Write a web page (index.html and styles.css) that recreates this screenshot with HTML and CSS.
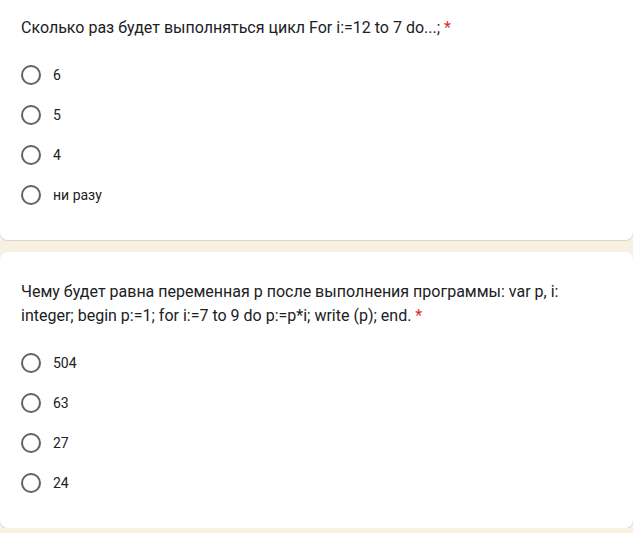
FILE: index.html
```html
<!DOCTYPE html>
<html lang="ru">
<head>
<meta charset="utf-8">
<title>Форма</title>
<link rel="stylesheet" href="styles.css">
</head>
<body>
<div class="page">
  <section class="card">
    <div class="question">Сколько раз будет выполняться цикл For i:=12 to 7 do...; <span class="req">*</span></div>
    <div class="options">
      <label class="option"><span class="radio"></span><span class="label">6</span></label>
      <label class="option"><span class="radio"></span><span class="label">5</span></label>
      <label class="option"><span class="radio"></span><span class="label">4</span></label>
      <label class="option"><span class="radio"></span><span class="label">ни разу</span></label>
    </div>
  </section>
  <section class="card">
    <div class="question">Чему будет равна переменная p после выполнения программы: var p, i: integer; begin p:=1; for i:=7 to 9 do p:=p*i; write (p); end. <span class="req">*</span></div>
    <div class="options">
      <label class="option"><span class="radio"></span><span class="label">504</span></label>
      <label class="option"><span class="radio"></span><span class="label">63</span></label>
      <label class="option"><span class="radio"></span><span class="label">27</span></label>
      <label class="option"><span class="radio"></span><span class="label">24</span></label>
    </div>
  </section>
</div>
</body>
</html>
```
FILE: styles.css
```css
html, body {
  margin: 0;
  padding: 0;
  background: #f7f0e3;
  overflow: hidden;
}
.page {
  margin-top: -12px;
  display: flex;
  flex-direction: column;
  gap: 12px;
}
.card {
  background: #fff;
  border-radius: 8px;
  box-shadow: 0 1px 1px rgba(0,0,0,0.12);
  padding: 28px 24px 25px 21px;
}
.question {
  font-family: Roboto, "Noto Sans", sans-serif;
  font-size: 16px;
  line-height: 24px;
  color: #202124;
  max-width: 580px;
  margin-bottom: 15px;
}
.req {
  color: #d93025;
}
.options {
  display: flex;
  flex-direction: column;
}
.option {
  display: flex;
  align-items: center;
  height: 40px;
}
.radio {
  box-sizing: border-box;
  width: 20px;
  height: 20px;
  border: 2px solid #5f6368;
  border-radius: 50%;
  flex: none;
}
.label {
  margin-left: 12px;
  font-family: Roboto, "Noto Sans", sans-serif;
  font-size: 14px;
  color: #202124;
}
```
